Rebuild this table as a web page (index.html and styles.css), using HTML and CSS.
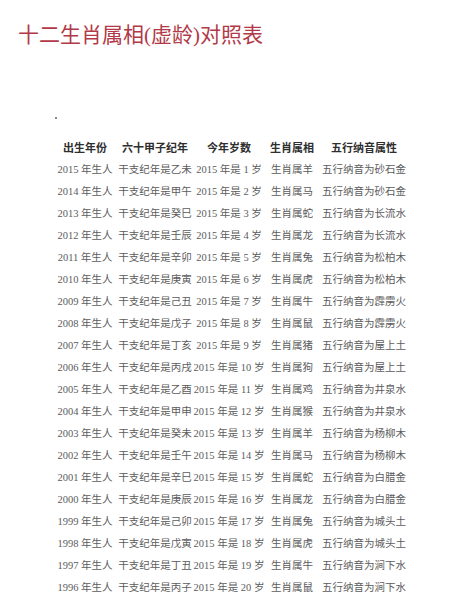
FILE: index.html
```html
<!DOCTYPE html>
<html lang="zh">
<head>
<meta charset="utf-8">
<link rel="stylesheet" href="styles.css">
</head>
<body>
<h1 class="title">十二生肖属相(虚龄)对照表</h1>
<div class="dot"></div>
<div class="table">
  <div class="row head"><span>出生年份</span><span>六十甲子纪年</span><span>今年岁数</span><span>生肖属相</span><span>五行纳音属性</span></div>
  <div class="row"><span>2015 年生人</span><span>干支纪年是乙未</span><span>2015 年是 1 岁</span><span>生肖属羊</span><span>五行纳音为砂石金</span></div>
  <div class="row"><span>2014 年生人</span><span>干支纪年是甲午</span><span>2015 年是 2 岁</span><span>生肖属马</span><span>五行纳音为砂石金</span></div>
  <div class="row"><span>2013 年生人</span><span>干支纪年是癸巳</span><span>2015 年是 3 岁</span><span>生肖属蛇</span><span>五行纳音为长流水</span></div>
  <div class="row"><span>2012 年生人</span><span>干支纪年是壬辰</span><span>2015 年是 4 岁</span><span>生肖属龙</span><span>五行纳音为长流水</span></div>
  <div class="row"><span>2011 年生人</span><span>干支纪年是辛卯</span><span>2015 年是 5 岁</span><span>生肖属兔</span><span>五行纳音为松柏木</span></div>
  <div class="row"><span>2010 年生人</span><span>干支纪年是庚寅</span><span>2015 年是 6 岁</span><span>生肖属虎</span><span>五行纳音为松柏木</span></div>
  <div class="row"><span>2009 年生人</span><span>干支纪年是己丑</span><span>2015 年是 7 岁</span><span>生肖属牛</span><span>五行纳音为霹雳火</span></div>
  <div class="row"><span>2008 年生人</span><span>干支纪年是戊子</span><span>2015 年是 8 岁</span><span>生肖属鼠</span><span>五行纳音为霹雳火</span></div>
  <div class="row"><span>2007 年生人</span><span>干支纪年是丁亥</span><span>2015 年是 9 岁</span><span>生肖属猪</span><span>五行纳音为屋上土</span></div>
  <div class="row"><span>2006 年生人</span><span>干支纪年是丙戌</span><span>2015 年是 10 岁</span><span>生肖属狗</span><span>五行纳音为屋上土</span></div>
  <div class="row"><span>2005 年生人</span><span>干支纪年是乙酉</span><span>2015 年是 11 岁</span><span>生肖属鸡</span><span>五行纳音为井泉水</span></div>
  <div class="row"><span>2004 年生人</span><span>干支纪年是甲申</span><span>2015 年是 12 岁</span><span>生肖属猴</span><span>五行纳音为井泉水</span></div>
  <div class="row"><span>2003 年生人</span><span>干支纪年是癸未</span><span>2015 年是 13 岁</span><span>生肖属羊</span><span>五行纳音为杨柳木</span></div>
  <div class="row"><span>2002 年生人</span><span>干支纪年是壬午</span><span>2015 年是 14 岁</span><span>生肖属马</span><span>五行纳音为杨柳木</span></div>
  <div class="row"><span>2001 年生人</span><span>干支纪年是辛巳</span><span>2015 年是 15 岁</span><span>生肖属蛇</span><span>五行纳音为白腊金</span></div>
  <div class="row"><span>2000 年生人</span><span>干支纪年是庚辰</span><span>2015 年是 16 岁</span><span>生肖属龙</span><span>五行纳音为白腊金</span></div>
  <div class="row"><span>1999 年生人</span><span>干支纪年是己卯</span><span>2015 年是 17 岁</span><span>生肖属兔</span><span>五行纳音为城头土</span></div>
  <div class="row"><span>1998 年生人</span><span>干支纪年是戊寅</span><span>2015 年是 18 岁</span><span>生肖属虎</span><span>五行纳音为城头土</span></div>
  <div class="row"><span>1997 年生人</span><span>干支纪年是丁丑</span><span>2015 年是 19 岁</span><span>生肖属牛</span><span>五行纳音为涧下水</span></div>
  <div class="row"><span>1996 年生人</span><span>干支纪年是丙子</span><span>2015 年是 20 岁</span><span>生肖属鼠</span><span>五行纳音为涧下水</span></div>
</div>
</body>
</html>
```
FILE: styles.css
```css
html, body {
  margin: 0;
  padding: 0;
  background: #fff;
}
body {
  font-family: "Liberation Serif", "Noto Sans CJK SC", serif;
  width: 466px;
  height: 600px;
  overflow: hidden;
}
.title {
  margin: 0;
  padding: 24px 0 0 18px;
  font-family: "Liberation Serif", "Noto Sans CJK SC", serif;
  font-size: 21px;
  line-height: 22px;
  font-weight: 400;
  color: #b23a48;
}
.dot {
  margin: 71px 0 0 55px;
  width: 2px;
  height: 2px;
  background: #888;
}
.table {
  margin: 18px 0 0 56px;
  display: flex;
  flex-direction: column;
}
.row {
  display: grid;
  grid-template-columns: 58px 82px 66px 60px 84px;
  height: 22px;
  align-items: center;
  font-size: 10.5px;
  color: #5c5c5c;
}
.row span {
  text-align: center;
  white-space: nowrap;
  display: flex;
  justify-content: center;
}
.row.head {
  height: 20px;
  font-weight: 700;
  font-size: 11px;
  color: #2e2e2e;
}
```
